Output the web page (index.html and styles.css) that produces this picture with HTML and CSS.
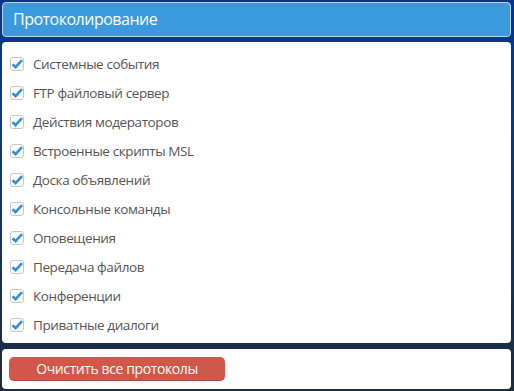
FILE: index.html
```html
<!DOCTYPE html>
<html lang="ru">
<head>
    <meta charset="UTF-8">
    <title>Протоколирование</title>
    <link rel="stylesheet" href="styles.css">
</head>
<body>
    <div class="window">
        <div class="header">Протоколирование</div>

        <div class="panel logs">
            <label class="log-row"><input type="checkbox" checked><span>Системные события</span></label>
            <label class="log-row"><input type="checkbox" checked><span>FTP файловый сервер</span></label>
            <label class="log-row"><input type="checkbox" checked><span>Действия модераторов</span></label>
            <label class="log-row"><input type="checkbox" checked><span>Встроенные скрипты MSL</span></label>
            <label class="log-row"><input type="checkbox" checked><span>Доска объявлений</span></label>
            <label class="log-row"><input type="checkbox" checked><span>Консольные команды</span></label>
            <label class="log-row"><input type="checkbox" checked><span>Оповещения</span></label>
            <label class="log-row"><input type="checkbox" checked><span>Передача файлов</span></label>
            <label class="log-row"><input type="checkbox" checked><span>Конференции</span></label>
            <label class="log-row"><input type="checkbox" checked><span>Приватные диалоги</span></label>
        </div>

        <div class="panel actions">
            <button class="clear-btn">Очистить все протоколы</button>
        </div>
    </div>
</body>
</html>
```

FILE: styles.css
```css
html, body {
    margin: 0;
    height: 100%;
}

body {
    font-family: 'Open Sans', 'Noto Sans', sans-serif;
    background: linear-gradient(180deg, #07348c 0%, #0b3a86 30%, #14335f 60%, #1c2c3c 100%);
    overflow: hidden;
}

.window {
    padding: 2px 3px 0 2px;
    display: flex;
    flex-direction: column;
}

.header {
    height: 33px;
    line-height: 33px;
    background-color: #3a9add;
    border: 1px solid #b9d4ec;
    border-radius: 4px;
    color: #ffffff;
    font-size: 16px;
    letter-spacing: -0.5px;
    padding-left: 10px;
}

.panel {
    background-color: #ffffff;
    border-radius: 4px;
}

.logs {
    margin-top: 5px;
    height: 294px;
    padding-top: 7px;
}

.log-row {
    display: flex;
    align-items: center;
    height: 29px;
    padding-left: 8px;
    color: #555555;
    font-size: 13.5px;
    letter-spacing: -0.4px;
}

.log-row input {
    appearance: none;
    width: 14px;
    height: 14px;
    margin: 0 9px 0 0;
    border: 1px solid #c6c6c6;
    border-radius: 3px;
    background: #ffffff url("data:image/svg+xml,%3Csvg xmlns='http://www.w3.org/2000/svg' viewBox='0 0 14 14'%3E%3Cpath d='M2.5 7.2 L5.6 10.2 L12 3.2' fill='none' stroke='%232f8fe0' stroke-width='2.6'/%3E%3C/svg%3E") center / 14px 14px no-repeat;
    box-sizing: border-box;
}

.actions {
    margin-top: 6px;
    height: 40px;
    padding: 8px 7px;
    box-sizing: border-box;
}

.clear-btn {
    width: 216px;
    height: 24px;
    background-color: #d0574a;
    border: none;
    border-bottom: 1px solid #b3473c;
    border-radius: 5px;
    color: #ffffff;
    font-family: 'Open Sans', 'Noto Sans', sans-serif;
    font-size: 14px;
    letter-spacing: -0.4px;
    padding: 0;
    cursor: pointer;
}
```
